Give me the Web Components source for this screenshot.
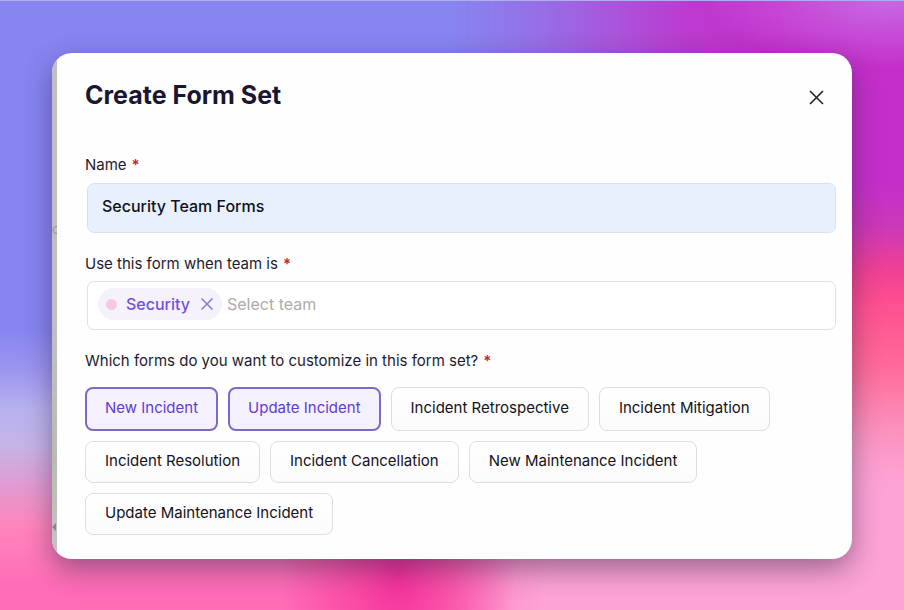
<!DOCTYPE html>
<html lang="en">
<head>
<meta charset="utf-8">
<meta name="viewport" content="width=device-width, initial-scale=1">
<title>Create Form Set</title>
<style>
    body {
        margin: 0;
        font-family: Inter, "Liberation Sans", sans-serif;
        color: #1d1b2e;
    }
</style>
</head>
<body>
<color-backdrop>
    <form-dialog heading="Create Form Set">
        <text-field label="Name" value="Security Team Forms"></text-field>
        <tag-field label="Use this form when team is" placeholder="Select team">
            <team-tag>Security</team-tag>
        </tag-field>
        <chip-group label="Which forms do you want to customize in this form set?">
            <form-chip selected>New Incident</form-chip>
            <form-chip selected>Update Incident</form-chip>
            <form-chip>Incident Retrospective</form-chip>
            <form-chip>Incident Mitigation</form-chip>
            <form-chip>Incident Resolution</form-chip>
            <form-chip>Incident Cancellation</form-chip>
            <form-chip>New Maintenance Incident</form-chip>
            <form-chip>Update Maintenance Incident</form-chip>
        </chip-group>
    </form-dialog>
</color-backdrop>

<script>
const labelStyles = `
    .label {
        display: flex;
        gap: 5px;
        font-size: 15px;
        line-height: 20px;
    }
    .required {
        font-weight: 600;
        color: #c8202f;
    }
`;

class ColorBackdrop extends HTMLElement {
    constructor() {
        super();
        this.attachShadow({ mode: 'open' });
        this.shadowRoot.innerHTML = `
            <style>
                :host {
                    display: block;
                    position: relative;
                    z-index: 0;
                    box-sizing: border-box;
                    min-height: 100vh;
                    padding: 52px;
                    border-top: 1px solid #b0acf0;
                    background: linear-gradient(#8785f2 0%, #8785f2 54%, #9b94f0 60%, #b8b2f0 67%, #c6b4e6 73%, #e598d0 80%, #ff85bc 86%, #ff6cb8 96%);
                }
                /* warm side, faded in from the middle */
                :host::before,
                :host::after {
                    content: "";
                    position: absolute;
                    inset: 0;
                    z-index: -1;
                }
                :host::before {
                    background:
                        radial-gradient(ellipse 20% 11% at 98% 0%, #c868e4 0%, #c868e400 100%),
                        linear-gradient(#c42fca 0%, #c42fca 30%, #cb38b8 37%, #ef4094 44%, #ff5090 50%, #ff6a9a 60%, #fc90bc 70%, #fda3d6 80%);
                    -webkit-mask: linear-gradient(to right, #0000 50%, #0004 60%, #000d 76%, #000 86%);
                    mask: linear-gradient(to right, #0000 50%, #0004 60%, #000d 76%, #000 86%);
                }
                :host::after {
                    background:
                        radial-gradient(ellipse 13% 30% at 44% 94%, #f4309c 0%, #f8409ecc 35%, #fa50a800 100%),
                        radial-gradient(ellipse 36% 34% at 80% 100%, #fda3d6 0%, #fda3d6 55%, #fda3d600 100%);
                }
            </style>
            <slot></slot>
        `;
    }
}

class FormDialog extends HTMLElement {
    constructor() {
        super();
        this.attachShadow({ mode: 'open' });
        this.shadowRoot.innerHTML = `
            <style>
                :host {
                    display: flex;
                    overflow: hidden;
                    border-radius: 20px;
                    background: #fefefe;
                    box-shadow: 0 10px 28px rgba(40, 30, 60, 0.46);
                }
                .edge {
                    flex: none;
                    display: flex;
                    flex-direction: column;
                    justify-content: space-between;
                    box-sizing: border-box;
                    width: 5px;
                    padding: 171px 0 26px;
                    background: linear-gradient(#bfbec0 60%, #b9bbb2 80%, #c4c3c1);
                }
                .edge svg {
                    display: block;
                }
                section {
                    flex: 1;
                    min-width: 0;
                    padding: 26px 16px 24px 28px;
                }
                header {
                    display: flex;
                    justify-content: space-between;
                    align-items: center;
                    margin-bottom: 44px;
                    padding-right: 8px;
                }
                h1 {
                    margin: 0;
                    font-size: 25px;
                    font-weight: 700;
                    line-height: 32px;
                    color: #1a1630;
                }
                button {
                    display: flex;
                    padding: 8px 4px 4px;
                    border: 0;
                    background: none;
                    color: #222;
                    cursor: pointer;
                }
                form {
                    display: flex;
                    flex-direction: column;
                    gap: 21px;
                }
            </style>
            <div class="edge" aria-hidden="true">
                <svg width="5" height="12" viewBox="0 0 5 12" fill="none" stroke="#8d8c8e"><path d="M5 2.5C2.5 2.5 1 4 1 6s1.500 3.500 4 3.500"/></svg>
                <svg width="5" height="12" viewBox="0 0 5 12" fill="#858585"><path d="M0 6 4 2v8z"/></svg>
            </div>
            <section role="dialog" aria-labelledby="heading">
                <header>
                    <h1 id="heading"></h1>
                    <button type="button" aria-label="Close">
                        <svg width="15" height="15" viewBox="0 0 15 15" fill="none" stroke="currentColor" stroke-width="1.600"><path d="M1 1l13 13M14 1L1 14"/></svg>
                    </button>
                </header>
                <form><slot></slot></form>
            </section>
        `;
        this.shadowRoot.getElementById('heading').textContent = this.getAttribute('heading');
    }
}

class TextField extends HTMLElement {
    constructor() {
        super();
        this.attachShadow({ mode: 'open' });
        this.shadowRoot.innerHTML = `
            <style>
                :host {
                    display: block;
                }
                ${labelStyles}
                input {
                    display: block;
                    box-sizing: border-box;
                    width: calc(100% - 2px);
                    height: 50px;
                    margin: 8px 0 0 2px;
                    padding: 0 14px 4px;
                    border: 1px solid #d9e2e8;
                    border-radius: 7px;
                    background: #e8f0fd;
                    font: 500 16px/24px Inter, "Liberation Sans", sans-serif;
                    color: #10101c;
                }
            </style>
            <label class="label" for="field"><span id="text"></span><span class="required">*</span></label>
            <input id="field" type="text" required>
        `;
        this.shadowRoot.getElementById('text').textContent = this.getAttribute('label');
        this.shadowRoot.getElementById('field').value = this.getAttribute('value');
    }
}

class TagField extends HTMLElement {
    constructor() {
        super();
        this.attachShadow({ mode: 'open' });
        this.shadowRoot.innerHTML = `
            <style>
                :host {
                    display: block;
                }
                ${labelStyles}
                .box {
                    display: flex;
                    align-items: center;
                    gap: 5px;
                    box-sizing: border-box;
                    height: 49px;
                    margin: 7px 0 0 2px;
                    padding: 0 10px 3px;
                    border: 1px solid #e2e1e2;
                    border-radius: 7px;
                    background: #fff;
                }
                input {
                    flex: 1;
                    min-width: 0;
                    padding: 0;
                    border: 0;
                    outline: 0;
                    background: none;
                    font: 16px/24px Inter, "Liberation Sans", sans-serif;
                    color: inherit;
                }
                input::placeholder {
                    color: #adacad;
                    opacity: 1;
                }
            </style>
            <label class="label" for="field"><span id="text"></span><span class="required">*</span></label>
            <div class="box">
                <slot></slot>
                <input id="field" type="text">
            </div>
        `;
        this.shadowRoot.getElementById('text').textContent = this.getAttribute('label');
        this.shadowRoot.getElementById('field').placeholder = this.getAttribute('placeholder');
    }
}

class TeamTag extends HTMLElement {
    constructor() {
        super();
        this.attachShadow({ mode: 'open' });
        this.shadowRoot.innerHTML = `
            <style>
                :host {
                    display: flex;
                    align-items: center;
                    padding: 4px 8px;
                    border-radius: 16px;
                    background: #f5f2fc;
                    font-size: 16px;
                    font-weight: 500;
                    line-height: 24px;
                    color: #7350dc;
                }
                .dot {
                    width: 11px;
                    height: 11px;
                    margin-right: 9px;
                    border-radius: 50%;
                    background: #f6cadd;
                }
                button {
                    display: flex;
                    margin-left: 10px;
                    padding: 1px;
                    border: 0;
                    background: none;
                    color: #8d73e0;
                    cursor: pointer;
                }
            </style>
            <span class="dot"></span>
            <slot></slot>
            <button type="button" aria-label="Remove team">
                <svg width="12" height="12" viewBox="0 0 12 12" fill="none" stroke="currentColor" stroke-width="1.500"><path d="M.5.5l11 11M11.500.5l-11 11"/></svg>
            </button>
        `;
    }
}

class ChipGroup extends HTMLElement {
    constructor() {
        super();
        this.attachShadow({ mode: 'open' });
        this.shadowRoot.innerHTML = `
            <style>
                :host {
                    display: block;
                }
                ${labelStyles}
                .chips {
                    display: flex;
                    flex-wrap: wrap;
                    gap: 10px;
                    margin-top: 16px;
                }
            </style>
            <div class="label" id="label"><span id="text"></span><span class="required">*</span></div>
            <div class="chips" role="group" aria-labelledby="label"><slot></slot></div>
        `;
        this.shadowRoot.getElementById('text').textContent = this.getAttribute('label');
    }
}

class FormChip extends HTMLElement {
    constructor() {
        super();
        this.attachShadow({ mode: 'open' });
        this.shadowRoot.innerHTML = `
            <style>
                :host {
                    display: flex;
                }
                button {
                    padding: 9px 19px 11px;
                    border: 1px solid #dfdedf;
                    border-radius: 8px;
                    background: linear-gradient(#fff, #fbfbfc);
                    font: 15px/20px Inter, "Liberation Sans", sans-serif;
                    color: #141220;
                    cursor: pointer;
                }
                button[aria-pressed="true"] {
                    padding: 9px 18px 11px;
                    border: 2px solid #8069c4;
                    background: #f5f1fe;
                    color: #5f3cd0;
                }
            </style>
            <button type="button"><slot></slot></button>
        `;
        this.button = this.shadowRoot.querySelector('button');
        this.button.addEventListener('click', () => this.toggleAttribute('selected'));
    }

    static get observedAttributes() {
        return ['selected'];
    }

    connectedCallback() {
        this.update();
    }

    attributeChangedCallback() {
        this.update();
    }

    update() {
        this.button.setAttribute('aria-pressed', this.hasAttribute('selected'));
    }
}

customElements.define('color-backdrop', ColorBackdrop);
customElements.define('form-dialog', FormDialog);
customElements.define('text-field', TextField);
customElements.define('tag-field', TagField);
customElements.define('team-tag', TeamTag);
customElements.define('chip-group', ChipGroup);
customElements.define('form-chip', FormChip);
</script>
</body>
</html>
